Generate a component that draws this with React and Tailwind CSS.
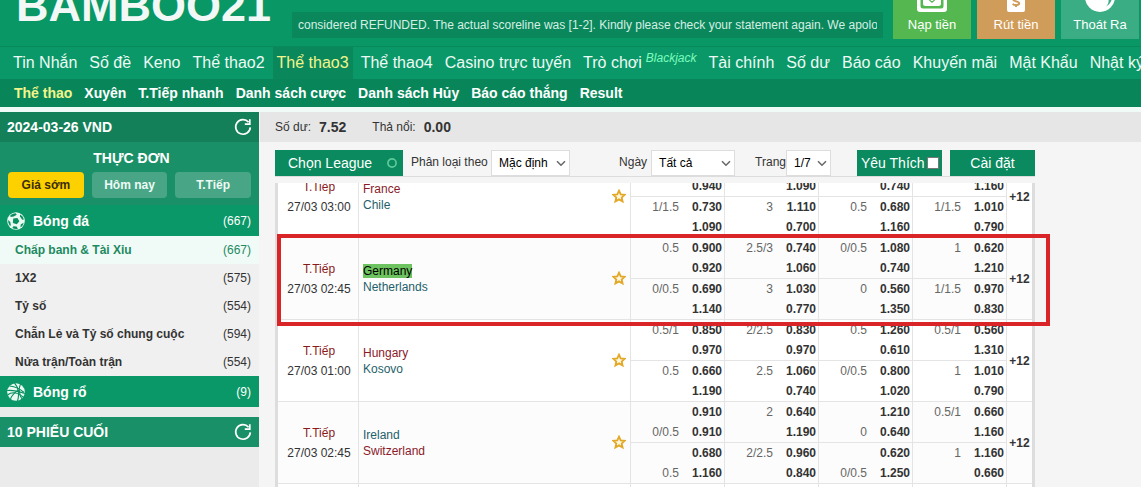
import { useState } from "react";

const navItems = [
    { name: "Tin Nhắn" },
    { name: "Số đề" },
    { name: "Keno" },
    { name: "Thể thao2" },
    { name: "Thể thao3", active: true },
    { name: "Thể thao4" },
    { name: "Casino trực tuyến" },
    { name: "Trò chơi", tag: "Blackjack" },
    { name: "Tài chính" },
    { name: "Số dư" },
    { name: "Báo cáo" },
    { name: "Khuyến mãi" },
    { name: "Mật Khẩu" },
    { name: "Nhật ký" },
];

const subItems = [
    "Thể thao",
    "Xuyên",
    "T.Tiếp nhanh",
    "Danh sách cược",
    "Danh sách Hủy",
    "Báo cáo thắng",
    "Result",
];

const markets = [
    { name: "Chấp banh & Tài Xỉu", count: 667 },
    { name: "1X2", count: 575 },
    { name: "Tỷ số", count: 554 },
    { name: "Chẵn Lẻ và Tỷ số chung cuộc", count: 594 },
    { name: "Nửa trận/Toàn trận", count: 554 },
];

// odds: one entry per column, each with four [handicap, price] lines
const matches = [
    {
        time: "27/03 03:00",
        teams: ["France", "Chile"],
        favourite: 0,
        odds: [
            [["", ""], ["", "0.940"], ["1/1.5", "0.730"], ["", "1.090"]],
            [["", ""], ["", "1.090"], ["3", "1.110"], ["", "0.700"]],
            [["", ""], ["", "0.740"], ["0.5", "0.680"], ["", "1.160"]],
            [["", ""], ["", "1.160"], ["1/1.5", "1.010"], ["", "0.790"]],
        ],
    },
    {
        time: "27/03 02:45",
        teams: ["Germany", "Netherlands"],
        favourite: 0,
        marked: 0,
        odds: [
            [["0.5", "0.900"], ["", "0.920"], ["0/0.5", "0.690"], ["", "1.140"]],
            [["2.5/3", "0.740"], ["", "1.060"], ["3", "1.030"], ["", "0.770"]],
            [["0/0.5", "1.080"], ["", "0.740"], ["0", "0.560"], ["", "1.350"]],
            [["1", "0.620"], ["", "1.210"], ["1/1.5", "0.970"], ["", "0.830"]],
        ],
    },
    {
        time: "27/03 01:00",
        teams: ["Hungary", "Kosovo"],
        favourite: 0,
        odds: [
            [["0.5/1", "0.850"], ["", "0.970"], ["0.5", "0.660"], ["", "1.190"]],
            [["2/2.5", "0.830"], ["", "0.970"], ["2.5", "1.060"], ["", "0.740"]],
            [["0.5", "1.260"], ["", "0.610"], ["0/0.5", "0.800"], ["", "1.020"]],
            [["0.5/1", "0.560"], ["", "1.310"], ["1", "1.010"], ["", "0.790"]],
        ],
    },
    {
        time: "27/03 02:45",
        teams: ["Ireland", "Switzerland"],
        favourite: 1,
        odds: [
            [["", "0.910"], ["0/0.5", "0.910"], ["", "0.680"], ["0.5", "1.160"]],
            [["2", "0.640"], ["", "1.190"], ["2/2.5", "0.960"], ["", "0.840"]],
            [["", "1.210"], ["0", "0.640"], ["", "0.620"], ["0/0.5", "1.250"]],
            [["0.5/1", "0.660"], ["", "1.160"], ["1", "1.160"], ["", "0.660"]],
        ],
    },
];

function RefreshIcon() {
    return (
        <svg width="18" height="18" viewBox="0 0 18 18" fill="none" stroke="currentColor" strokeWidth="1.7">
            <path d="M14.6 4.2A7.3 7.3 0 1 0 16.3 9.4" />
            <path d="M15.8 1.2v4.9h-5" />
        </svg>
    );
}

function FootballIcon() {
    return (
        <svg width="18" height="18" viewBox="0 0 18 18">
            <circle cx="9" cy="9" r="8.8" fill="#e9faf2" />
            <g fill="#0a8f60">
                <path d="M6.2 6.6l4.2-.5 2 3.2-2.6 3-3.9-1.3z" />
                <path d="M3.4 3.2C5 1.900 6.500 1.300 8.600 1.200l1.200 1.500-3 1.800-3.300.4z" />
                <path d="M13 2.400c2 1.200 3.300 2.700 3.900 5l-1.600.3-2.300-3.100z" />
                <path d="M1.100 8l2.200 1.900.6 3.500-1 .3C1.600 12 1.100 10 1.100 8z" />
                <path d="M6.400 14.200l3.200.3 1.300 2.200c-2 .6-3.900.3-5.600-.7z" />
                <path d="M13.700 12.500l2.900-1.800c-.4 2-1.400 3.500-3.100 4.700z" />
            </g>
        </svg>
    );
}

function BasketballIcon() {
    return (
        <svg width="18" height="18" viewBox="0 0 18 18">
            <circle cx="9" cy="9" r="8.8" fill="#e9faf2" />
            <g fill="none" stroke="#0a8f60" strokeWidth="1.1">
                <path d="M.2 7.500C5 6.800 12 8.500 17.800 10.500" />
                <path d="M2.500 3C7 3.500 13 5.500 17 9.500" />
                <path d="M7.500 0C11.500 4 12.500 12 10.500 18" />
                <path d="M13.500 1C11.500 5 12 12 15 16" />
                <path d="M.5 12C5 8.500 11 9.500 16 14" />
                <path d="M3.500 16C5 12 9 8.500 12 7" />
            </g>
        </svg>
    );
}

function StarIcon() {
    return (
        <svg width="14" height="16" viewBox="0 0 14 16" fill="#fff8e0" stroke="#e3a828" strokeWidth="1.8">
            <path d="M7 1.700l1.700 3.700 4 .4-3 2.700.9 4L7 10.400l-3.600 2.100.9-4-3-2.700 4-.4z" />
        </svg>
    );
}

function ActionButton({ label, className, children }) {
    return (
        <button className={"flex h-20 w-[78px] flex-col items-center justify-end pb-1 text-[13px] leading-5 text-white " + className}>
            {children}
            <span className="pt-[3px]">{label}</span>
        </button>
    );
}

function Header() {
    return (
        <header className="flex h-[46px] items-end overflow-hidden pr-[2px]">
            <div className="w-[292px] shrink-0 pb-4 pl-4 text-[45px] leading-[48px] font-bold text-[#f1f8f5]">
                BAMBOO21
            </div>
            <div className="mb-2 min-w-0 flex-1 bg-[#0a875b] px-[6px]">
                <p className="overflow-hidden text-xs leading-[26px] whitespace-nowrap text-[#d6efe4]">
                    considered REFUNDED. The actual scoreline was [1-2]. Kindly please check your statement again. We apolo
                </p>
            </div>
            <div className="mb-[7px] ml-[10px] flex shrink-0 gap-[6px]">
                <ActionButton label="Nạp tiền" className="bg-[#54b74f]">
                    <svg width="30" height="30" viewBox="0 0 30 30">
                        <rect width="30" height="30" rx="3" fill="#fff" />
                        <rect x="3.500" y="3.500" width="23" height="23" rx="2.500" fill="#54b74f" />
                        <rect x="6" y="5" width="18" height="19" rx="2.500" fill="#fff" />
                        <path d="M10.500 5h9v12l-4.500 4-4.500-4z" fill="#54b74f" />
                        <path d="M13.800 7h2.400v12h-2.400z" fill="#fff" />
                    </svg>
                </ActionButton>
                <ActionButton label="Rút tiền" className="bg-[#d09c5a]">
                    <svg width="18" height="30" viewBox="0 0 18 30">
                        <rect width="18" height="30" rx="2" fill="#fff" />
                        <g fill="none" stroke="#d09c5a" strokeWidth="2">
                            <path d="M12.300 16.500c-1.200-1.400-6.300-1.500-6.300.8 0 2.400 6.200 1.700 6.200 4 0 2.100-5 2.200-6.500.5" />
                            <path d="M9 14v2M9 22.500v2.500" />
                        </g>
                    </svg>
                </ActionButton>
                <ActionButton label="Thoát Ra" className="bg-[#3aad84]">
                    <svg width="30" height="30" viewBox="0 0 30 30">
                        <circle cx="15" cy="15" r="15" fill="#fff" />
                        <path d="M21 24.500c2.700-3 3.200-5.500 2-8.500h4c-.5 3.700-2.600 6.700-6 8.500z" fill="#3aad84" />
                    </svg>
                </ActionButton>
            </div>
        </header>
    );
}

function Nav() {
    return (
        <>
            <nav className="flex h-[33px] gap-1 overflow-hidden border-t border-[#088a5d] bg-[#0a9868] pl-[9px] text-base leading-8 whitespace-nowrap text-[#eefaf5]">
                {navItems.map((item) => (
                    <a
                        key={item.name}
                        href="#"
                        className={"flex shrink-0 px-1 " + (item.active ? "bg-[#0a875b] text-[#f3f58b]" : "")}
                    >
                        {item.name}
                        {item.tag && (
                            <span className="ml-1 text-xs leading-[22px] text-[#7dfcbd] italic">{item.tag}</span>
                        )}
                    </a>
                ))}
            </nav>
            <nav className="flex h-7 gap-3 overflow-hidden bg-[#08865a] pl-[14px] text-sm leading-7 font-bold whitespace-nowrap text-white">
                {subItems.map((name, index) => (
                    <a key={name} href="#" className={index === 0 ? "text-[#f3f58b]" : ""}>
                        {name}
                    </a>
                ))}
            </nav>
        </>
    );
}

function SportHeader({ icon, name, count }) {
    return (
        <a href="#" className="flex h-[31px] items-center bg-[#0a9868] pr-2 pl-[7px] text-white">
            {icon}
            <span className="ml-2 flex-1 text-sm font-bold">{name}</span>
            <span className="text-xs">({count})</span>
        </a>
    );
}

function Sidebar() {
    const [tab, setTab] = useState("Giá sớm");

    return (
        <aside className="w-[259px] shrink-0 bg-[#ebebeb]">
            <div className="flex h-[30px] items-center justify-between bg-[#14805a] pr-[7px] pl-[7px] text-sm font-bold text-white">
                2024-03-26 VND
                <button aria-label="Refresh">
                    <RefreshIcon />
                </button>
            </div>
            <div className="h-[63px] bg-[#1a9068] px-2 pt-[6px]">
                <h2 className="pl-1 text-center text-sm leading-5 font-bold text-white">THỰC ĐƠN</h2>
                <div className="mt-1 flex gap-2">
                    {["Giá sớm", "Hôm nay", "T.Tiếp"].map((name) => (
                        <button
                            key={name}
                            onClick={() => setTab(name)}
                            className={
                                "h-[26px] flex-1 rounded-sm text-xs font-bold " +
                                (tab === name ? "bg-[#fdd000] text-[#3a2c00]" : "bg-[#48a686] text-[#eefaf5]")
                            }
                        >
                            {name}
                        </button>
                    ))}
                </div>
            </div>
            <SportHeader icon={<FootballIcon />} name="Bóng đá" count={667} />
            <ul>
                {markets.map((market, index) => (
                    <li key={market.name}>
                        <a
                            href="#"
                            className={
                                "flex h-7 items-center justify-between pr-2 pl-[15px] text-xs " +
                                (index === 0 ? "bg-[#f0faf7] text-[#1d8a60]" : "bg-[#f0f0f0] text-[#333]")
                            }
                        >
                            <span className="font-bold">{market.name}</span>
                            <span>({market.count})</span>
                        </a>
                    </li>
                ))}
            </ul>
            <SportHeader icon={<BasketballIcon />} name="Bóng rổ" count={9} />
            <div className="mt-[10px] flex h-[30px] items-center justify-between bg-[#1a9068] px-[7px] text-sm font-bold text-white">
                10 PHIẾU CUỐI
                <button aria-label="Refresh">
                    <RefreshIcon />
                </button>
            </div>
        </aside>
    );
}

function Dropdown({ id, value, className }) {
    return (
        <div className={"relative " + className}>
            <select
                id={id}
                className="h-[26px] w-full appearance-none border border-[#ddd] bg-white pl-[7px] text-xs text-black"
            >
                <option>{value}</option>
            </select>
            <svg
                className="pointer-events-none absolute top-[10px] right-1"
                width="10"
                height="7"
                viewBox="0 0 10 7"
                fill="none"
                stroke="#666"
                strokeWidth="1.5"
            >
                <path d="M1 1.300l4 3.900 4-3.900" />
            </svg>
        </div>
    );
}

function Toolbar() {
    return (
        <div className="flex h-[27px] items-start border-b border-[#ddd] text-xs leading-6 text-[#333]">
            <button className="flex h-[26px] w-32 items-center justify-between bg-[#0a8a5e] pr-[6px] pl-[13px] text-sm text-white">
                Chọn League
                <svg width="10" height="10" viewBox="0 0 10 10" fill="none" stroke="#5cc99a" strokeWidth="1.7">
                    <circle cx="5" cy="5" r="4.1" />
                </svg>
            </button>
            <label htmlFor="sort" className="ml-2 w-20">
                Phân loại theo
            </label>
            <Dropdown id="sort" value="Mặc định" className="w-[79px]" />
            <div className="flex flex-1 justify-end">
                <label htmlFor="date" className="mr-1">
                    Ngày
                </label>
                <Dropdown id="date" value="Tất cả" className="w-[84px]" />
                <label htmlFor="page" className="ml-5">
                    Trang
                </label>
                <Dropdown id="page" value="1/7" className="w-[45px]" />
            </div>
            <label className="ml-[26px] flex h-[26px] w-[85px] items-center justify-between bg-[#0a8a5e] pr-[3px] pl-1 text-sm text-white">
                Yêu Thích
                <input type="checkbox" className="size-3 appearance-none border border-[#777] bg-white" />
            </label>
            <button className="ml-2 h-[26px] w-[85px] bg-[#0a8a5e] text-sm text-white">Cài đặt</button>
        </div>
    );
}

function OddsLine({ line }) {
    return (
        <div className="flex h-5 items-center pr-[2px]">
            <span className="w-12 text-right text-[#666]">{line[0]}</span>
            <span className="flex-1 text-right font-bold">{line[1]}</span>
        </div>
    );
}

function MatchRow({ match }) {
    return (
        <tr className="odd:bg-white even:bg-[#fcfcfc]">
            <td className="w-[81px] border-r border-b border-[#e4e4e4] p-0 pl-[2px] text-center leading-5">
                <div className="text-[#8b1a1a]">T.Tiếp</div>
                <div>{match.time}</div>
            </td>
            <td className="border-r border-b border-[#e4e4e4] p-0 pr-1 pl-1">
                <div className="flex items-center justify-between leading-4">
                    <div>
                        {match.teams.map((team, index) => (
                            <div key={team} className={match.favourite === index ? "text-[#8b1a2a]" : "text-[#1f5f6b]"}>
                                {match.marked === index ? (
                                    <mark className="bg-[#6cc35f] text-black">{team}</mark>
                                ) : (
                                    team
                                )}
                            </div>
                        ))}
                    </div>
                    <button aria-label="Favourite">
                        <StarIcon />
                    </button>
                </div>
            </td>
            {match.odds.map((lines, index) => (
                <td key={index} className="w-[94px] border-r border-b border-[#e4e4e4] p-0">
                    <div className="border-b border-[#e4e4e4]">
                        <OddsLine line={lines[0]} />
                        <OddsLine line={lines[1]} />
                    </div>
                    <OddsLine line={lines[2]} />
                    <OddsLine line={lines[3]} />
                </td>
            ))}
            <td className="w-[25px] border-b border-[#e4e4e4] p-0 text-center font-bold">+12</td>
        </tr>
    );
}

function MatchTable() {
    return (
        <div className="relative mt-[6px] min-h-0 flex-1">
            <div className="h-full overflow-hidden border-x-[3px] border-[#ddd] bg-white">
                <table className="-mt-[27px] w-full table-fixed border-separate border-spacing-0 text-xs text-[#333]">
                    <tbody>
                        {matches.map((match) => (
                            <MatchRow key={match.teams[0]} match={match} />
                        ))}
                        <tr className="h-5">
                            {[0, 1, 2, 3, 4, 5].map((cell) => (
                                <td key={cell} className="border-r border-[#e4e4e4]" />
                            ))}
                            <td />
                        </tr>
                    </tbody>
                </table>
            </div>
            <div className="pointer-events-none absolute top-[51px] -right-[15px] left-[2px] h-[92px] border-4 border-[#da2528]" />
        </div>
    );
}

export default function App() {
    return (
        <div className="flex h-screen flex-col overflow-hidden bg-[#099766] font-['Liberation_Sans',Arial,sans-serif]">
            <Header />
            <Nav />
            <div className="flex min-h-0 flex-1 border-t-[5px] border-[#f0faf7] bg-[#f5f5f5]">
                <Sidebar />
                <main className="ml-px flex min-w-0 flex-1 flex-col">
                    <div className="flex h-[30px] shrink-0 items-center bg-[#e6e6e6] pl-[15px] text-xs text-[#333]">
                        Số dư:
                        <b className="ml-2 text-sm">7.52</b>
                        <span className="ml-[26px]">Thả nổi:</span>
                        <b className="ml-2 text-sm">0.00</b>
                    </div>
                    <div className="mt-2 ml-[15px] flex min-h-0 w-full max-w-[760px] flex-1 flex-col">
                        <Toolbar />
                        <MatchTable />
                    </div>
                </main>
            </div>
        </div>
    );
}
